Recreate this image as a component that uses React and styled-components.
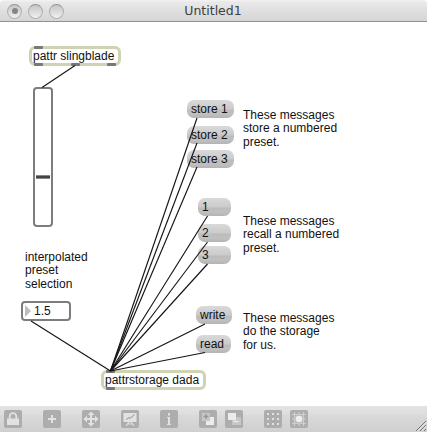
import React from "react";
import styled, { createGlobalStyle } from "styled-components";

const GlobalStyle = createGlobalStyle`
  html, body { margin: 0; padding: 0; background: #fff; overflow: hidden; }
  * { box-sizing: border-box; }
`;

const Window = styled.div`
  display: flex;
  flex-direction: column;
  width: 427px;
  height: 432px;
  background: #fff;
  color: #111;
  font: 12px/14px "Liberation Sans", Arial, sans-serif;
`;

const TitleBar = styled.header`
  display: grid;
  grid-template-columns: 66px 1fr 74px;
  align-items: center;
  flex: none;
  height: 22px;
  padding-left: 7px;
  border-bottom: 1px solid #929292;
  border-radius: 4px 4px 0 0;
  background: linear-gradient(#f4f4f4 0, #e9e9e9 2px, #d5d5d5 100%);
`;

const Lights = styled.div`
  display: flex;
  gap: 6px;
  padding-top: 1px;
`;

const Light = styled.span`
  display: grid;
  place-items: center;
  width: 15px;
  height: 15px;
  border: 1px solid #b0b0b0;
  border-top-color: #959595;
  border-radius: 50%;
  background: linear-gradient(#c6c6c6, #d8d8d8 45%, #f1f1f1);

  &::after {
    content: "";
    width: 6px;
    height: 6px;
    border-radius: 50%;
    background: ${(p) => (p.$edited ? "#858585" : "transparent")};
  }
`;

const Title = styled.h1`
  margin: 1px 0 0;
  text-align: center;
  font: 12.5px/16px "DejaVu Sans", sans-serif;
  color: #404040;
`;

const Patcher = styled.main`
  position: relative;
  flex: 1;
`;

/* Every patcher object is placed freely on the canvas. */
const Node = styled.div`
  position: absolute;
  left: ${(p) => p.$x}px;
  top: ${(p) => p.$y}px;
  width: ${(p) => p.$w}px;
  white-space: nowrap;
`;

const ObjectBox = styled(Node)`
  height: 20px;
  padding-left: 1px;
  border: 3px solid #cfd3b1;
  border-radius: 6px;
  background: #fff;
`;

const Port = styled.i`
  position: absolute;
  left: ${(p) => p.$at - 3}px;
  ${(p) => (p.$out ? "bottom" : "top")}: -3px;
  width: 9px;
  height: 3px;
  border-radius: 1px;
  background: #77777a;
`;

const Message = styled(Node)`
  height: 18px;
  padding: 2px 0 0 4px;
  border-radius: 7px;
  background: linear-gradient(#d9d9d9 0, #cbcbcb 9px, #bcbcbc 10px, #c0c0c0 14px, #b4b4b4 100%);
`;

const Comment = styled(Node)`
  line-height: 13.5px;
  white-space: pre;
`;

const Slider = styled(Node)`
  display: flex;
  flex-direction: column;
  align-items: center;
  height: 140px;
  padding-top: 86px;
  border: 2px solid #7d7d7d;
  border-radius: 4px;
`;

const Thumb = styled.span`
  width: 14px;
  height: 4px;
  border: solid #888;
  border-width: 1px 0;
  background: #444;
`;

const NumberBox = styled(Node)`
  display: flex;
  align-items: center;
  gap: 3px;
  height: 20px;
  padding-left: 2px;
  border: 2px solid #7d7d7d;
  border-radius: 4px;
`;

const Triangle = styled.span`
  border-style: solid;
  border-width: 6px 0 6px 6px;
  border-color: transparent transparent transparent #bdbdbd;
`;

const Cords = styled.svg`
  position: absolute;
  inset: 0;
  pointer-events: none;
`;

const Toolbar = styled.footer`
  display: flex;
  align-items: flex-start;
  flex: none;
  gap: 21px;
  height: 26px;
  padding: 4px 0 0 4px;
  background: linear-gradient(#e3e3e3, #dedede 8px, #dadada 9px, #cfcfcf);
`;

const Group = styled.div`
  display: flex;
  gap: 8px;
`;

const Tool = styled.button`
  display: block;
  width: 18px;
  height: 18px;
  padding: 0;
  border: 0;
  border-radius: 2px;
  background: #adadad;
  color: #e2e2e2;

  svg { display: block; }
`;

const Grip = styled.svg`
  align-self: flex-end;
  margin-left: auto;
`;

const messages = [
  ["store 1", 187, 78, 47],
  ["store 2", 187, 104, 47],
  ["store 3", 187, 128, 47],
  ["1", 198, 176, 33],
  ["2", 198, 202, 33],
  ["3", 198, 224, 33],
  ["write", 196, 284, 36],
  ["read", 196, 313, 35],
];

const comments = [
  ["interpolated\npreset\nselection", 25, 228.6, 70],
  ["These messages\nstore a numbered\npreset.", 243, 86.6, 110],
  ["These messages\nrecall a numbered\npreset.", 243, 192.6, 110],
  ["These messages\ndo the storage\nfor us.", 243, 289.6, 110],
];

const sources = [
  [197, 96], [197, 121], [197, 145], [207.5, 194],
  [207.5, 220], [207.5, 242], [205, 302], [205, 330.5], [31, 299],
];

const groups = [
  [["Lock", (
    <>
      <path d="M5.7 9V6.5a3.3 3.3 0 0 1 6.6 0V9" fill="none" stroke="currentColor" strokeWidth="1.8" />
      <path d="M3 8.5h12V15H3z" fill="currentColor" />
    </>
  )]],
  [["Add", <path d="M8 5h2v3h3v2h-3v3H8v-3H5V8h3z" fill="currentColor" />]],
  [["Move", (
    <path d="M9 1.5 12.5 5H10v3h3V5.5L16.5 9 13 12.5V10h-3v3h2.5L9 16.5 5.5 13H8v-3H5v2.5L1.5 9 5 5.5V8h3V5H5.5z" fill="currentColor" />
  )]],
  [["Presentation", (
    <>
      <path d="M2.5 3h13v9h-13z" fill="currentColor" />
      <path d="m5 9.5 3-2 1 1 4.5-4" fill="none" stroke="#adadad" strokeWidth="1.2" />
      <path d="m8 12-3 4m5-4 3 4M6.5 14h5" fill="none" stroke="currentColor" strokeWidth="1.2" />
    </>
  )]],
  [["Inspector", <path d="M8 3h2v2.5H8zM7 7h3v7h1v1H7v-1h1V8H7z" fill="currentColor" />]],
  [
    ["Bring to front", (
      <>
        <path d="M7 7h8v8H7z" fill="#ececec" />
        <path d="M3 3h8v8H3z" fill="#c6c6c6" />
        <path d="M7 4v5M4.5 6.5h5" stroke="#969696" strokeWidth="1.4" />
      </>
    )],
    ["Send to back", (
      <>
        <path d="M7 7h9v8H7z" fill="#c6c6c6" />
        <path d="M3 3h8v7H3z" fill="#ececec" />
        <path d="M8.5 11.5h5" stroke="#eee" strokeWidth="1.4" />
      </>
    )],
  ],
  [
    ["Grid", (
      <path d="M3 3h2v2H3zm5 0h2v2H8zm5 0h2v2h-2zM3 8h2v2H3zm5 0h2v2H8zm5 0h2v2h-2zM3 13h2v2H3zm5 0h2v2H8zm5 0h2v2h-2z" fill="currentColor" />
    )],
    ["Snap", (
      <>
        <path d="M4.5 2v14M9 2v14M13.5 2v14M2 4.5h14M2 9h14M2 13.5h14" stroke="#d0d0d0" strokeWidth="1.2" />
        <circle cx="9" cy="9" r="4.5" fill="#bcbcbc" />
        <circle cx="9" cy="9" r="3.3" fill="#ededed" />
      </>
    )],
  ],
];

export default function App() {
  return (
    <>
      <GlobalStyle />
      <Window>
        <TitleBar>
          <Lights>
            <Light $edited />
            <Light />
            <Light />
          </Lights>
          <Title>Untitled1</Title>
        </TitleBar>

        <Patcher>
          <ObjectBox $x={29} $y={24} $w={92}>
            <Port $at={5} />
            pattr slingblade
            <Port $at={5} $out />
            <Port $at={42} $out />
            <Port $at={78} $out />
          </ObjectBox>
          <Slider $x={33} $y={65} $w={20}>
            <Thumb />
          </Slider>
          <NumberBox $x={21} $y={279} $w={50}>
            <Triangle />
            1.5
          </NumberBox>
          {comments.map(([text, x, y, w]) => (
            <Comment key={text} $x={x} $y={y} $w={w}>{text}</Comment>
          ))}
          {messages.map(([text, x, y, w]) => (
            <Message key={text} $x={x} $y={y} $w={w}>{text}</Message>
          ))}
          <ObjectBox $x={101} $y={348} $w={105}>
            <Port $at={5} />
            pattrstorage dada
            <Port $at={5} $out />
          </ObjectBox>
          <Cords width="427" height="384" stroke="#151515" strokeWidth="1.15">
            <line x1="75" y1="43.5" x2="42" y2="65.5" />
            {sources.map(([x, y]) => (
              <line key={`${x}-${y}`} x1={x} y1={y} x2="110.5" y2="349" />
            ))}
          </Cords>
        </Patcher>

        <Toolbar>
          {groups.map((tools) => (
            <Group key={tools[0][0]}>
              {tools.map(([label, icon]) => (
                <Tool key={label} aria-label={label}>
                  <svg width="18" height="18" viewBox="0 0 18 18">{icon}</svg>
                </Tool>
              ))}
            </Group>
          ))}
          <Grip width="13" height="13" viewBox="0 0 13 13">
            <path d="M2 12 12 2M6 12l6-6M10 12l2-2" stroke="#777" />
            <path d="M3 12.5 12.5 3M7 12.5 12.5 7" stroke="#f2f2f2" strokeWidth=".6" />
          </Grip>
        </Toolbar>
      </Window>
    </>
  );
}
